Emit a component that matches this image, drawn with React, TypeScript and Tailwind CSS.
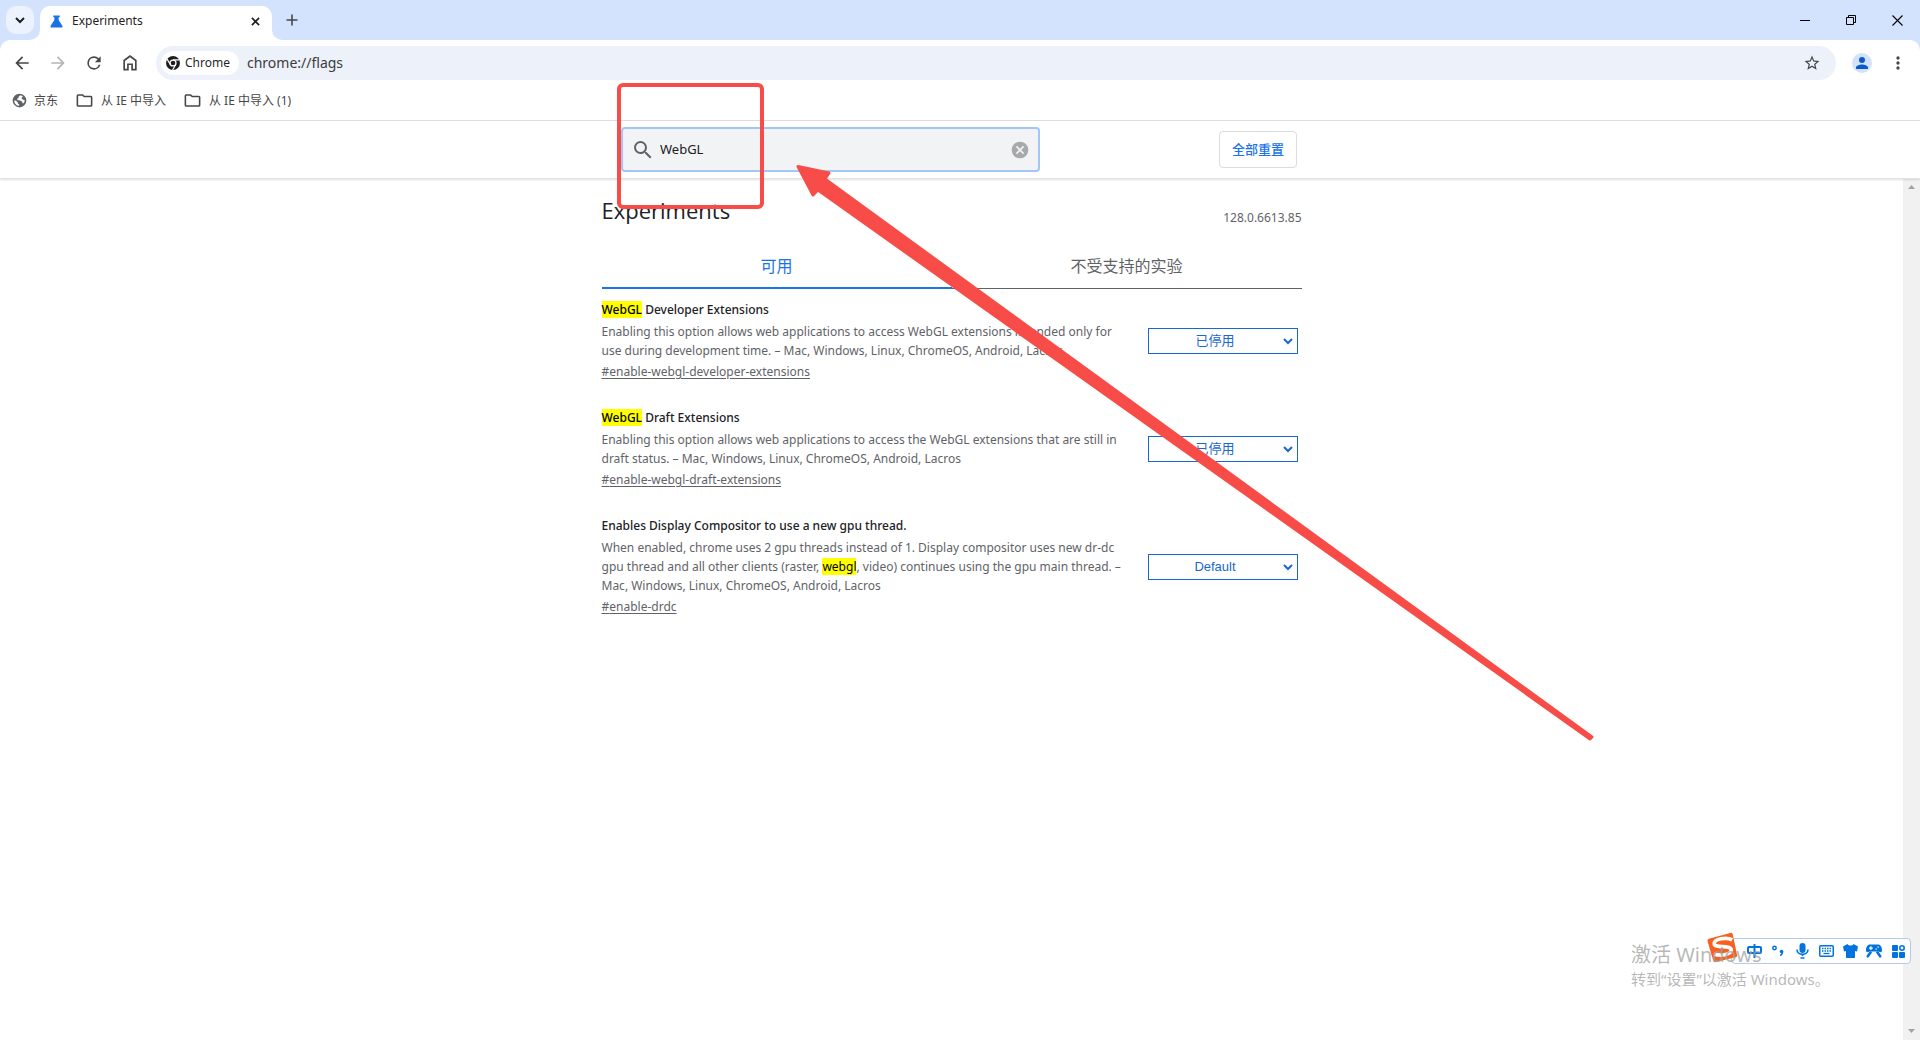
import React, { useState } from 'react';

interface Experiment {
  id: string;
  title: React.ReactNode;
  lines: React.ReactNode[];
  value: string;
}

function Hit({ children }: { children: React.ReactNode }) {
  return <mark className="bg-[#ffff00] text-black">{children}</mark>;
}

const EXPERIMENTS: Experiment[] = [
  {
    id: 'enable-webgl-developer-extensions',
    title: <><Hit>WebGL</Hit> Developer Extensions</>,
    lines: [
      'Enabling this option allows web applications to access WebGL extensions intended only for',
      'use during development time. – Mac, Windows, Linux, ChromeOS, Android, Lacros',
    ],
    value: '已停用',
  },
  {
    id: 'enable-webgl-draft-extensions',
    title: <><Hit>WebGL</Hit> Draft Extensions</>,
    lines: [
      'Enabling this option allows web applications to access the WebGL extensions that are still in',
      'draft status. – Mac, Windows, Linux, ChromeOS, Android, Lacros',
    ],
    value: '已停用',
  },
  {
    id: 'enable-drdc',
    title: 'Enables Display Compositor to use a new gpu thread.',
    lines: [
      'When enabled, chrome uses 2 gpu threads instead of 1. Display compositor uses new dr-dc',
      <>gpu thread and all other clients (raster, <Hit>webgl</Hit>, video) continues using the gpu main thread. –</>,
      'Mac, Windows, Linux, ChromeOS, Android, Lacros',
    ],
    value: 'Default',
  },
];

function Icon({ d, className, size = 20 }: { d: string; className?: string; size?: number }) {
  return (
    <svg width={size} height={size} viewBox="0 0 24 24" fill="currentColor" className={className} aria-hidden="true">
      <path d={d} fillRule="evenodd" />
    </svg>
  );
}

const ICONS = {
  back: 'M20 11H7.83l5.59-5.59L12 4l-8 8 8 8 1.41-1.41L7.83 13H20v-2z',
  forward: 'M12 4l-1.41 1.41L16.17 11H4v2h12.17l-5.58 5.59L12 20l8-8z',
  reload: 'M17.65 6.35A7.96 7.96 0 0 0 12 4a8 8 0 1 0 7.73 10h-2.08A6 6 0 1 1 12 6c1.66 0 3.14.69 4.22 1.78L13 11h7V4l-2.35 2.35z',
  home: 'M12 2.5l-8 6V21h6.5v-6.5h3V21H20V8.500l-8-6zm0 2.500l6 4.500V19h-2.500v-6.500h-7V19H6V9.500L12 5z',
  star: 'M22 9.24l-7.19-.62L12 2 9.19 8.63 2 9.24l5.46 4.73L5.82 21 12 17.27 18.18 21l-1.63-7.03L22 9.24zM12 15.4l-3.76 2.27 1-4.28-3.32-2.88 4.38-.38L12 6.1l1.71 4.04 4.38.38-3.32 2.88 1 4.28L12 15.4z',
  more: 'M12 8a2 2 0 1 0 0-4 2 2 0 0 0 0 4zm0 2a2 2 0 1 0 0 4 2 2 0 0 0 0-4zm0 6a2 2 0 1 0 0 4 2 2 0 0 0 0-4z',
  folder: 'M9.17 6l2 2H20v10H4V6h5.17M10 4H4a2 2 0 0 0-2 2v12c0 1.1.9 2 2 2h16a2 2 0 0 0 2-2V8a2 2 0 0 0-2-2h-8l-2-2z',
  person: 'M12 12a4 4 0 1 0 0-8 4 4 0 0 0 0 8zm0 2c-2.67 0-8 1.34-8 4v2h16v-2c0-2.66-5.33-4-8-4z',
  globe: 'M12 1a11 11 0 1 0 0 22 11 11 0 0 0 0-22zM3.500 12l3 .5 3 3v1.500l2 1.500v2A8.500 8.500 0 0 1 3.500 12zM17.500 17l-1.500-3.500-4-2h-3L8 9.500l2.500-2V6l3-2.400a8.500 8.500 0 0 1 4 1.900L15 8l2 2.500 3.500 1a8.500 8.500 0 0 1-3 5.500z',
  flask: 'M6 1h12v3h-2v5l7 11.500V23H1v-2.500L8 9V4H6z',
  search: 'M15.5 14h-.79l-.28-.27A6.470 6.470 0 0 0 16 9.500 6.500 6.500 0 1 0 9.500 16c1.610 0 3.090-.59 4.230-1.570l.27.28v.79l5 4.990L20.490 19l-4.990-5zm-6 0C7.010 14 5 11.990 5 9.500S7.010 5 9.500 5 14 7.010 14 9.500 11.990 14 9.500 14z',
  clear: 'M12 2a10 10 0 1 0 0 20 10 10 0 0 0 0-20zm5 13.59L15.59 17 12 13.41 8.41 17 7 15.59 10.59 12 7 8.41 8.41 7 12 10.59 15.59 7 17 8.41 13.41 12 17 15.59z',
};

function TabStrip() {
  return (
    <header className="flex h-10 items-end bg-[#d3e3fd]">
      <button aria-label="Search tabs" className="mb-1.5 ml-1.5 flex h-7 w-7 items-center justify-center rounded-[10px] bg-[#edf3fe] text-[#1f1f1f]">
        <svg width="10" height="8" viewBox="0 0 10 8" fill="none" stroke="currentColor" strokeWidth="2"><path d="M1 2l4 4 4-4" /></svg>
      </button>
      <div className="relative ml-1.5 flex h-[34px] w-[232px] items-center rounded-t-[10px] bg-white pl-2.5 pr-2">
        <svg className="absolute bottom-0 -left-2.5 text-white" width="10" height="10" fill="currentColor"><path d="M10 0v10H0A10 10 0 0 0 10 0z" /></svg>
        <svg className="absolute bottom-0 -right-2.5 text-white" width="10" height="10" fill="currentColor"><path d="M0 0v10h10A10 10 0 0 1 0 0z" /></svg>
        <Icon d={ICONS.flask} size={13} className="mb-1 text-[#1a73e8]" />
        <span className="mb-1 ml-[9px] flex-1 text-xs text-[#1f1f1f]">Experiments</span>
        <button aria-label="Close tab" className="mb-1 p-1 text-[#1f1f1f]">
          <svg width="9" height="9" viewBox="0 0 10 10" stroke="currentColor" strokeWidth="1.8"><path d="M1 1l8 8M9 1l-8 8" /></svg>
        </button>
      </div>
      <button aria-label="New tab" className="mb-3 ml-3 p-0.5 text-[#474747]">
        <svg width="12" height="12" viewBox="0 0 12 12" stroke="currentColor" strokeWidth="1.6"><path d="M6 0.5v11M0.5 6h11" /></svg>
      </button>
      <div className="ml-auto flex h-10 text-black">
        <button aria-label="Minimize" className="flex w-[46px] items-center justify-center">
          <svg width="10" height="10" stroke="currentColor"><path d="M0 5.5h10" /></svg>
        </button>
        <button aria-label="Restore" className="flex w-[46px] items-center justify-center">
          <svg width="10" height="10" fill="none" stroke="currentColor"><path d="M0.5 2.5h7v7h-7zM2.5 2.5v-2h7v7h-2" /></svg>
        </button>
        <button aria-label="Close" className="flex w-[46px] items-center justify-center">
          <svg width="11" height="11" stroke="currentColor" strokeWidth="1.1"><path d="M0.5 0.5l10 10M10.5 0.5l-10 10" /></svg>
        </button>
      </div>
    </header>
  );
}

function ChromeLogo() {
  return (
    <svg width="14" height="14" viewBox="0 0 24 24" aria-hidden="true">
      <circle cx="12" cy="12" r="12" fill="#1f1f1f" />
      <circle cx="12" cy="12" r="6.2" fill="#fff" />
      <circle cx="12" cy="12" r="4" fill="#1f1f1f" />
      <path d="M12 6.6h11M7.3 14.7L1.9 5.3M16.7 14.7l-5.4 9.3" stroke="#fff" strokeWidth="2" />
    </svg>
  );
}

function Toolbar() {
  return (
    <div className="bg-[#d3e3fd]">
      <nav className="flex items-center rounded-t-[10px] bg-white pt-1.5 pr-3 text-[#474747]">
        <div className="flex w-[156px] items-center gap-4 pl-3">
          <button aria-label="Back"><Icon d={ICONS.back} size={20} /></button>
          <button aria-label="Forward"><Icon d={ICONS.forward} size={20} className="text-[#b5b5b5]" /></button>
          <button aria-label="Reload"><Icon d={ICONS.reload} size={20} /></button>
          <button aria-label="Home"><Icon d={ICONS.home} size={20} /></button>
        </div>
        <div className="flex h-[34px] flex-1 items-center rounded-full bg-[#ecf1fa] pr-[15px] pl-[5px]">
          <span className="flex h-6 items-center gap-[5px] rounded-full bg-white pr-[9px] pl-[5px] text-xs text-[#1f1f1f]">
            <ChromeLogo />
            Chrome
          </span>
          <input
            aria-label="Address"
            defaultValue="chrome://flags"
            className="ml-2 flex-1 bg-transparent text-sm text-[#3c3c3c] outline-none"
          />
          <button aria-label="Bookmark this tab"><Icon d={ICONS.star} size={18} /></button>
        </div>
        <button aria-label="Profile" className="ml-4 flex h-5 w-5 items-center justify-center rounded-full bg-[#d3e3fd] text-[#0b57d0]">
          <Icon d={ICONS.person} size={18} />
        </button>
        <button aria-label="Menu" className="ml-4"><Icon d={ICONS.more} size={20} /></button>
      </nav>
    </div>
  );
}

function Bookmarks() {
  return (
    <nav className="flex h-[41px] items-center gap-[17px] border-b border-[#dfdfdf] pt-px pl-3 text-xs text-[#474747]">
      <a href="#jd" className="flex items-center gap-[7px]">
        <Icon d={ICONS.globe} size={15} className="text-[#5f6368]" />
        京东
      </a>
      <a href="#ie" className="flex items-center gap-[7px]">
        <Icon d={ICONS.folder} size={19} />
        从 IE 中导入
      </a>
      <a href="#ie1" className="flex items-center gap-[7px]">
        <Icon d={ICONS.folder} size={19} />
        从 IE 中导入 (1)
      </a>
    </nav>
  );
}

function ExperimentRow({ item }: { item: Experiment }) {
  return (
    <li className="flex items-center">
      <div className="w-[546px] whitespace-nowrap text-xs">
        <h3 className="leading-5 font-medium text-[#202124]">{item.title}</h3>
        <p className="mt-0.5 leading-[19px] text-[#5f6368]">
          {item.lines.map((line, i) => (
            <span key={i} className="block">{line}</span>
          ))}
        </p>
        <a href={`#${item.id}`} className="mt-0.5 block leading-5 text-[#5f6368] underline underline-offset-2">
          #{item.id}
        </a>
      </div>
      <div className="relative w-[150px] text-[#1967d2]">
        <select
          aria-label={item.id}
          className="block h-[26px] w-full appearance-none border border-[#1967d2] bg-white pr-[15px] text-center font-['Liberation_Sans','Noto_Sans_CJK_SC',sans-serif] text-[13px]"
        >
          <option>{item.value}</option>
        </select>
        <svg className="pointer-events-none absolute top-[10px] right-[5px]" width="10" height="7" viewBox="0 0 10 7" fill="none" stroke="currentColor" strokeWidth="2">
          <path d="M1 1l4 4 4-4" />
        </svg>
      </div>
    </li>
  );
}

function InputMethodBar() {
  return (
    <div className="absolute top-[932px] right-[9px] flex h-8 items-end text-[#0073e0]">
      <svg width="33" height="32" viewBox="0 0 34 32" className="relative z-10 -mr-2">
        <path d="M3 6.5L25 0.5a2 2 0 0 1 2.5 1.4L32 23c.3 1.300-.3 2.300-1.500 2.600L10 30.500c-1.300.3-2.300-.4-2.600-1.500L1.600 9C1.300 7.800 1.800 6.900 3 6.500z" fill="#f9601d" />
        <path d="M27 7.500C21 4.500 8.500 6.500 8.500 11.500c0 5 16.500 1 17.500 6 .5 5-10 7-17.500 5" fill="none" stroke="#fff" strokeWidth="3.800" />
      </svg>
      <div className="flex h-[26px] w-[180px] items-center rounded-sm border border-[#b4cbe8] bg-white pl-2.5">
        <button aria-label="中文" className="flex w-6 justify-center"><svg width="15" height="14" viewBox="0 0 15 14" fill="none" stroke="currentColor" strokeWidth="2"><rect x="1" y="3" width="13" height="6" rx="1" /><path d="M7.500 0v14" /></svg></button>
        <button aria-label="标点" className="flex w-6 justify-center"><svg width="12" height="12" viewBox="0 0 12 12" fill="none" stroke="currentColor" strokeWidth="1.500"><circle cx="2.500" cy="3" r="1.700" /><circle cx="9.500" cy="6.500" r="1.800" fill="currentColor" stroke="none" /><path d="M10.500 6.500c0 2-1 3.500-2.500 4" /></svg></button>
        <button aria-label="语音" className="flex w-6 justify-center"><svg width="13" height="16" viewBox="0 0 13 16" fill="none" stroke="currentColor" strokeWidth="1.600"><rect x="3.500" y="0" width="6" height="10" rx="3" fill="currentColor" stroke="none" /><path d="M1 6.500c0 6.500 11 6.500 11 0M6.500 11.500v1.500M4.500 15h4" /></svg></button>
        <button aria-label="键盘" className="flex w-6 justify-center"><svg width="15" height="12" viewBox="0 0 15 12" fill="none" stroke="currentColor"><rect x="0.750" y="0.750" width="13.500" height="10.500" rx="1" strokeWidth="1.500" /><path d="M3 3.500h9M3 6h9" strokeWidth="1.500" strokeDasharray="1.500 1" /><path d="M4.500 8.500h6" strokeWidth="1.300" /></svg></button>
        <button aria-label="皮肤" className="flex w-6 justify-center"><svg width="15" height="14" viewBox="0 0 15 14" fill="currentColor"><path d="M4.500 0L0 2.500 1 7.500 3 7V13c0 .6.4 1 1 1h7c.6 0 1-.4 1-1V7l2 .5L15 2.500 10.500 0c-1 2-5 2-6 0z" /></svg></button>
        <button aria-label="游戏" className="flex w-6 justify-center"><svg width="16" height="14" viewBox="0 0 16 14" fill="currentColor"><path fillRule="evenodd" d="M4 .5h8c2.500 0 4 2.500 4 5.500 0 2-1 2.500-2.200 2L12 7.500H4L2.200 8C1 8.500 0 8 0 6 0 3 1.500.5 4 .5zM4.300 2.300v1.200H3v1.200h1.300v1.200h1.200V4.700h1.300V3.500H5.500V2.300zM9.500 4.500v1.300h1.300V4.500zM11.500 2.500v1.300h1.300V2.500z" /><path d="M4.500 8.500l-2.700 3.800M11.500 8.500l2.700 3.800" stroke="currentColor" strokeWidth="2.600" strokeLinecap="round" /></svg></button>
        <button aria-label="工具箱" className="flex w-6 justify-center"><svg width="13" height="13" viewBox="0 0 13 13" fill="currentColor"><rect width="6" height="6" rx="1" /><rect x="7" y="7" width="6" height="6" rx="1" /><rect y="7" width="6" height="6" rx="1" /><circle cx="10" cy="3" r="2.200" fill="none" stroke="currentColor" strokeWidth="1.600" /></svg></button>
      </div>
    </div>
  );
}

export default function App() {
  const [query, setQuery] = useState('WebGL');

  return (
    <div className="relative flex min-h-screen flex-col overflow-hidden bg-white font-['Noto_Sans','Noto_Sans_CJK_SC',sans-serif]">
      <TabStrip />
      <Toolbar />
      <Bookmarks />

      {/* Search header */}
      <div className="z-10 border-b border-[#e2e2e2] py-1.5 shadow-[0_1px_2px_rgba(0,0,0,0.12)]">
        <div className="mx-auto flex max-w-[700px] items-center justify-between pr-[13px] pl-[11px]">
          <div className="flex h-[45px] w-[419px] items-center rounded border-2 border-[#a3c6fa] bg-[#f1f3f4] px-2">
            <Icon d={ICONS.search} size={24} className="text-[#5f6368]" />
            <input
              aria-label="Search flags"
              value={query}
              onChange={(e) => setQuery(e.target.value)}
              className="ml-[5px] flex-1 bg-transparent text-[13px] text-[#202124] outline-none"
            />
            <button aria-label="Clear search" onClick={() => setQuery('')} className="text-[#a7a9ab]">
              <Icon d={ICONS.clear} size={20} />
            </button>
          </div>
          <button className="h-[37px] w-[78px] rounded-sm border border-[#dadce0] text-[13px] font-medium text-[#1a73e8]">全部重置</button>
        </div>
      </div>

      <div className="flex flex-1">
        <main className="flex-1">
          <div className="mx-auto max-w-[700px] pt-[15px]">
            <div className="flex items-end justify-between">
              <h1 className="font-['Open_Sans',sans-serif] text-[22px] leading-8 text-[#202124]">Experiments</h1>
              <span className="text-xs leading-4 text-[#5f6368]">128.0.6613.85</span>
            </div>
            <div role="tablist" className="mt-4 flex text-base">
              <button role="tab" aria-selected="true" className="h-[47px] flex-1 border-b-2 border-[#1a73e8] pt-0.5 text-[#1a73e8]">可用</button>
              <button role="tab" aria-selected="false" className="h-[47px] flex-1 border-b border-[#5f6368] pt-0.5 text-[#5f6368]">不受支持的实验</button>
            </div>
            <ul className="mt-[11px] flex flex-col gap-[26px]">
              {EXPERIMENTS.map((item) => (
                <ExperimentRow key={item.id} item={item} />
              ))}
            </ul>
          </div>
        </main>
        <div className="flex w-[17px] flex-col items-center justify-between bg-[#f1f1f1] py-1.5 text-[#a3a3a3]">
          <svg width="7" height="5" fill="currentColor"><path d="M3.500 0L7 4H0z" /></svg>
          <svg width="7" height="5" fill="currentColor"><path d="M3.500 4L7 0H0z" /></svg>
        </div>
      </div>

      <InputMethodBar />

      {/* Activation watermark */}
      <div className="pointer-events-none absolute top-[939px] left-[1631px] z-20 whitespace-nowrap text-[#a0a0a0]/75">
        <p className="text-xl leading-8">激活 Windows</p>
        <p className="text-[15px] leading-4">转到“设置”以激活 Windows。</p>
      </div>

      {/* Annotations */}
      <div className="pointer-events-none absolute top-[83px] left-[617px] z-20 h-[126px] w-[147px] rounded-md border-4 border-[#f74c47]" />
      <svg className="pointer-events-none absolute top-[160px] left-[790px] z-20" width="810" height="590" viewBox="790 160 810 590">
        <path
          d="M798 166.500L829 173 825 179 1592 737 1590 739 818 190 813 195z"
          fill="#f74c47"
          stroke="#f74c47"
          strokeWidth="3"
          strokeLinejoin="round"
        />
      </svg>
    </div>
  );
}
